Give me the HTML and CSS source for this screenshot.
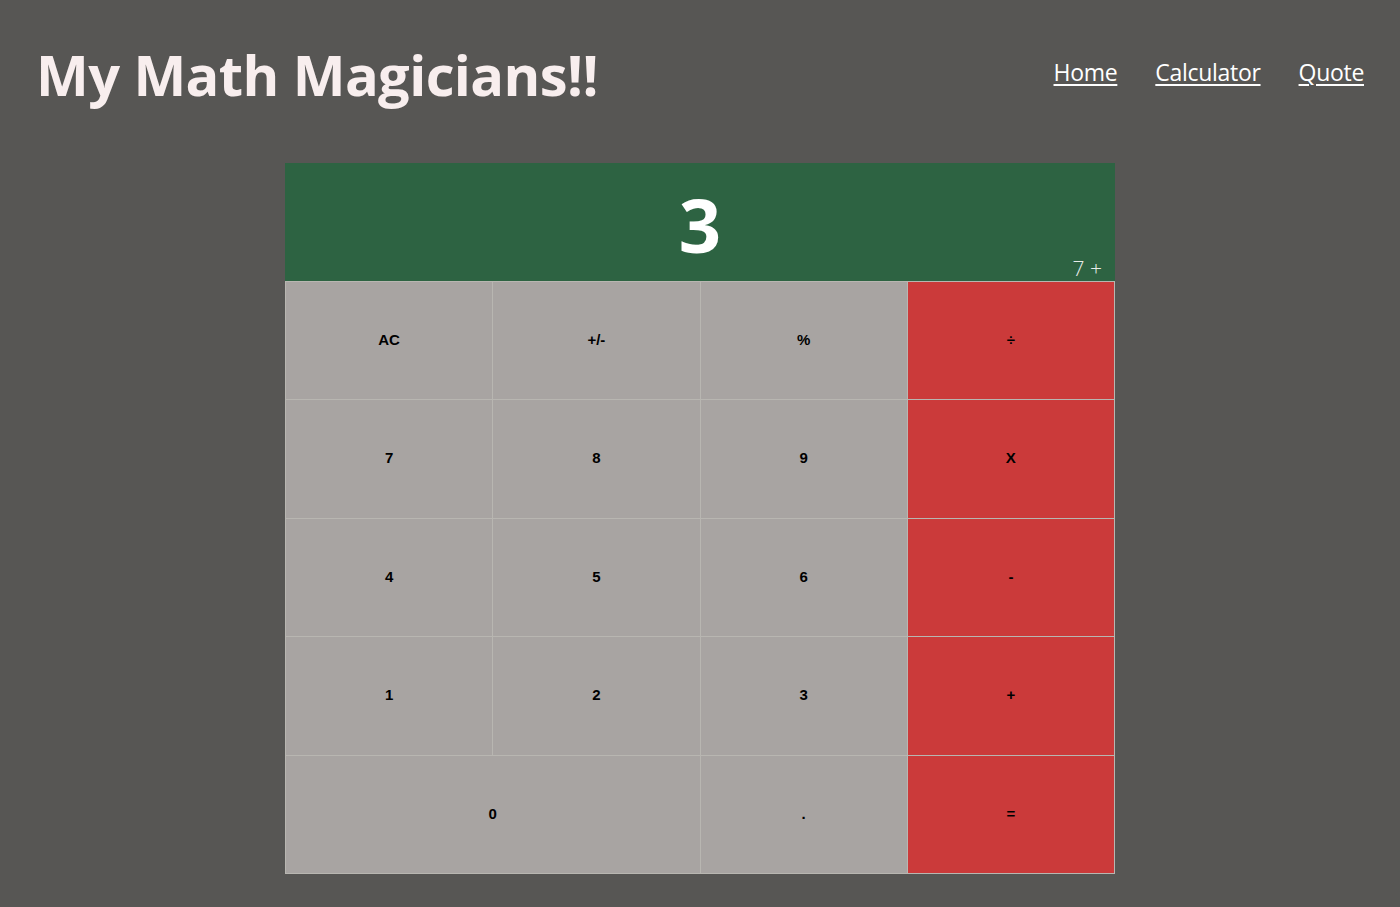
FILE: index.html
```html
<!DOCTYPE html>
<html lang="en">
<head>
<meta charset="utf-8">
<title>Math Magicians</title>
<link rel="stylesheet" href="styles.css">
</head>
<body>
<header class="header">
  <h1 class="title">My Math Magicians!!</h1>
  <nav class="nav">
    <a class="nav-link" href="#">Home</a>
    <a class="nav-link" href="#">Calculator</a>
    <a class="nav-link" href="#">Quote</a>
  </nav>
</header>
<main class="main">
  <div class="calculator">
    <div class="display">
      <span class="result">3</span>
      <span class="operation">7 +</span>
    </div>
    <button class="key">AC</button>
    <button class="key">+/-</button>
    <button class="key">%</button>
    <button class="key key-op">÷</button>
    <button class="key">7</button>
    <button class="key">8</button>
    <button class="key">9</button>
    <button class="key key-op">X</button>
    <button class="key">4</button>
    <button class="key">5</button>
    <button class="key">6</button>
    <button class="key key-op">-</button>
    <button class="key">1</button>
    <button class="key">2</button>
    <button class="key">3</button>
    <button class="key key-op">+</button>
    <button class="key key-wide">0</button>
    <button class="key">.</button>
    <button class="key key-op">=</button>
  </div>
</main>
</body>
</html>
```

FILE: styles.css
```css
* {
  box-sizing: border-box;
}

html, body {
  margin: 0;
  padding: 0;
}

body {
  background: #575654;
  font-family: "Open Sans", "Noto Sans", sans-serif;
  color: #f8eeee;
  min-height: 907px;
}

.header {
  display: flex;
  justify-content: space-between;
  align-items: flex-start;
  padding: 34px 36px 0 36px;
  height: 163px;
}

.title {
  margin: 0;
  font-size: 56px;
  font-weight: 700;
  line-height: 80px;
  letter-spacing: -0.6px;
  color: #f8eeee;
}

.nav {
  display: flex;
  gap: 38px;
  padding-top: 20px;
}

.nav-link {
  color: #ffffff;
  font-size: 23px;
  line-height: 36px;
  text-decoration: underline;
  text-underline-offset: 3px;
  text-decoration-thickness: 1.5px;
  letter-spacing: -0.3px;
}

.main {
  display: flex;
  justify-content: center;
}

.calculator {
  width: 830px;
  height: 711px;
  display: grid;
  grid-template-columns: repeat(4, 1fr);
  grid-template-rows: repeat(6, 1fr);
  gap: 1px;
  background: #b8b6b1;
  padding: 0 1px 1px 1px;
}

.display {
  grid-column: 1 / 5;
  background: #2d6342;
  position: relative;
  display: flex;
  align-items: center;
  justify-content: center;
  margin: 0 -1px;
}

.result {
  font-size: 74px;
  font-weight: 700;
  color: #ffffff;
  line-height: 1;
  padding-top: 6px;
}

.operation {
  position: absolute;
  right: 13px;
  bottom: 0;
  font-size: 21px;
  font-weight: 300;
  color: #e8ecea;
  line-height: 26px;
}

.key {
  border: none;
  margin: 0;
  padding: 0 0 2px;
  background: #a8a4a2;
  font-family: "Liberation Sans", Arial, sans-serif;
  font-size: 15px;
  font-weight: 700;
  color: #000000;
}

.key-op {
  background: #cb3a3a;
}

.key-wide {
  grid-column: span 2;
}
```
